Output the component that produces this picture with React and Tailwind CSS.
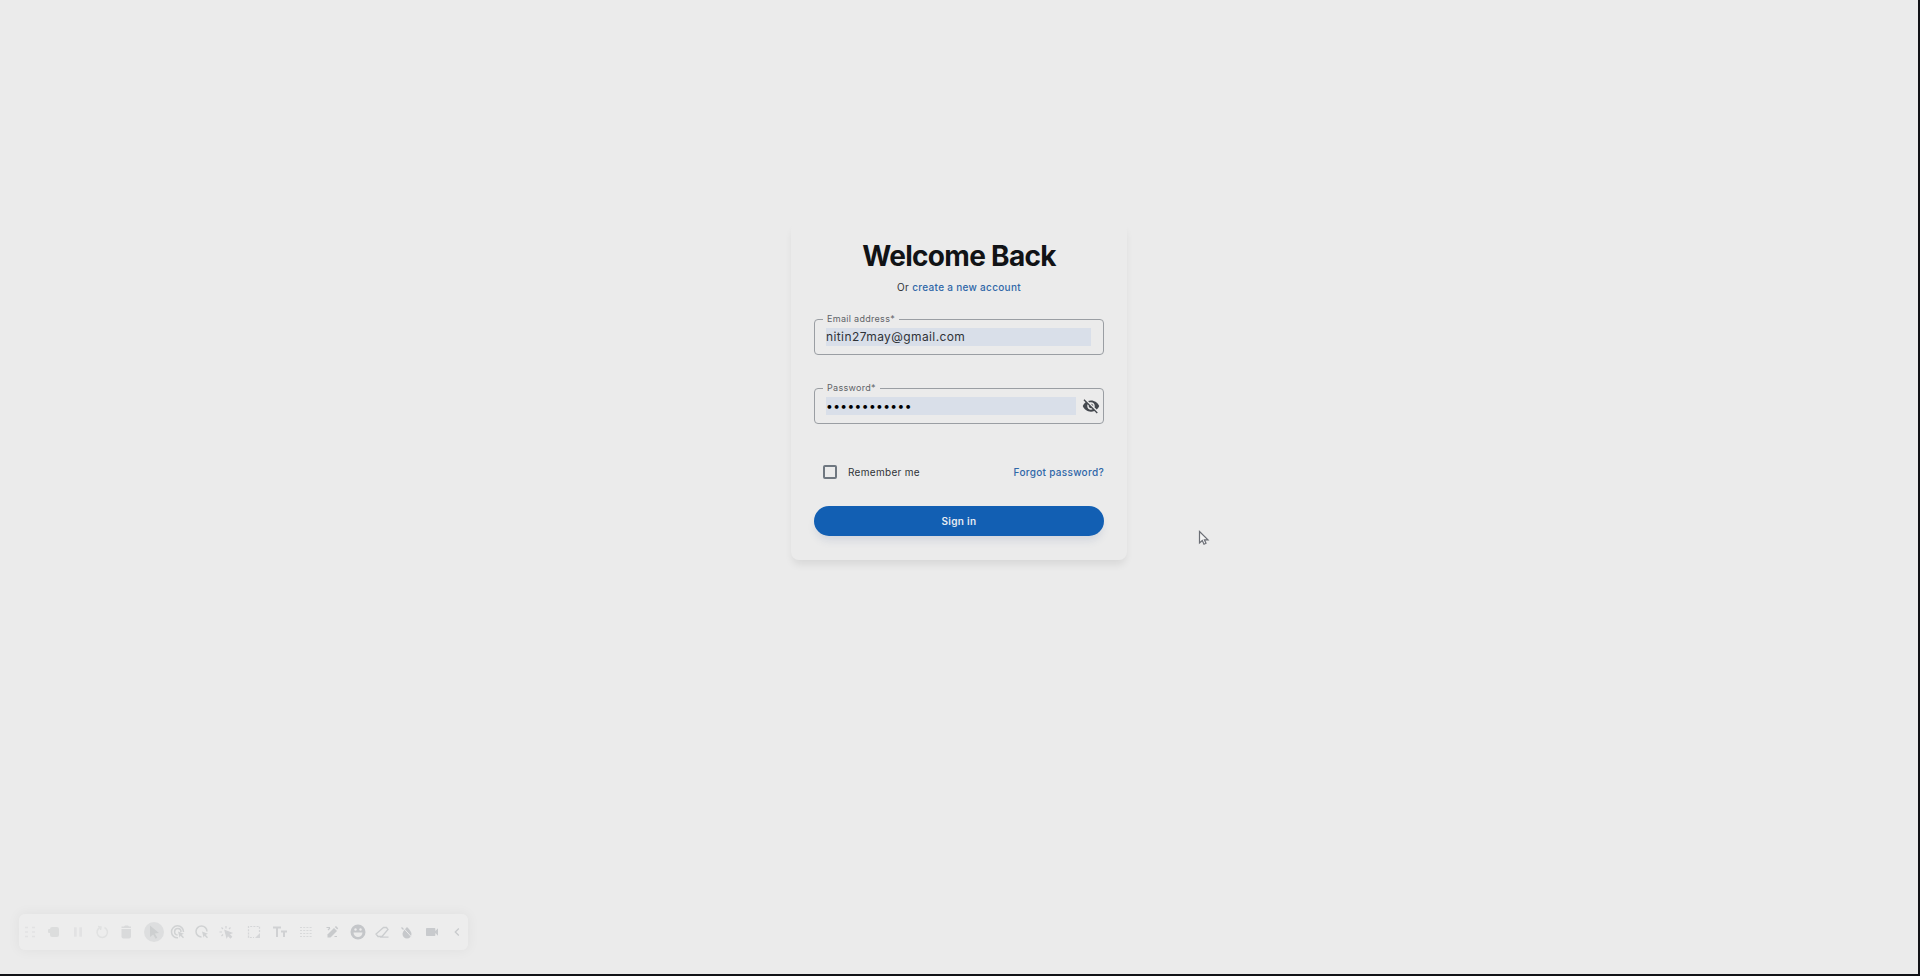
import { useState } from "react";
import {
  MdVisibilityOff,
  MdVisibility,
  MdPause,
  MdVideocam,
  MdChevronLeft,
} from "react-icons/md";

const MoveGlyph = () => (
  <svg viewBox="0 0 16 16" className="size-4" fill="none" stroke="currentColor" strokeWidth="1.5">
    <path d="M3 3.500h3M10 3.500h3M3 8h3M10 8h3M3 12.500h3M10 12.500h3" />
  </svg>
);

const RecordGlyph = () => (
  <svg viewBox="0 0 16 16" className="size-4" fill="currentColor">
    <rect x="4" y="3" width="9" height="10" rx="2" />
    <rect x="2" y="5" width="4" height="4" rx="1" />
  </svg>
);

const RestartGlyph = () => (
  <svg viewBox="0 0 16 16" className="size-4" fill="none" stroke="currentColor" strokeWidth="1.5">
    <path d="M6 3.500a5.200 5.200 0 1 0 4.500 0" />
    <path d="M4 2.500l3 .5-.5 3" />
  </svg>
);

const TrashGlyph = () => (
  <svg viewBox="0 0 16 16" className="size-4" fill="currentColor">
    <path d="M3.500 2.500h2.500L7 1.500h3l1 1h2V4H3.500z" />
    <path d="M3.500 5h9.500v7.500a2 2 0 0 1-2 2H5.500a2 2 0 0 1-2-2z" />
  </svg>
);

const PointerGlyph = () => (
  <svg viewBox="0 0 16 16" className="size-4" fill="currentColor">
    <path d="M4 1.500l9 7.500-4.200.6 2.500 4.200-1.700 1-2.400-4.300L4 13z" />
  </svg>
);

const TargetCursor = () => (
  <svg viewBox="0 0 16 16" className="size-4" fill="none" stroke="currentColor" strokeWidth="1.5">
    <path d="M13.500 8A6 6 0 1 0 8 13.800" />
    <path d="M11 8a3.200 3.200 0 1 0-3.400 3" />
    <path d="M8 7.500l6 2.300-2.300 1 2.300 2.500-1 1-2.500-2.500-.9 2z" fill="currentColor" stroke="none" />
  </svg>
);

const CircleCursor = () => (
  <svg viewBox="0 0 16 16" className="size-4" fill="none" stroke="currentColor" strokeWidth="1.5">
    <path d="M13 7.500A5.500 5.500 0 1 0 7.500 13" />
    <path d="M8 7.500l6 2.300-2.300 1 2.300 2.500-1 1-2.500-2.500-.9 2z" fill="currentColor" stroke="none" />
  </svg>
);

const ClickGlyph = () => (
  <svg viewBox="0 0 16 16" className="size-4" fill="none" stroke="currentColor" strokeWidth="1.2">
    <path d="M8 2v2.500M3.500 3.500l1.500 1.500M1.500 8H4M3.500 12L5 10.500M12.500 3.500L11 5" />
    <path d="M7 6.500l6.500 2.500-2.500 1 2.500 2.800-1 1L9.800 11l-1 2.200z" fill="currentColor" />
  </svg>
);

const SelectGlyph = () => (
  <svg viewBox="0 0 16 16" className="size-4" fill="none" stroke="currentColor" strokeWidth="1.2">
    <path d="M13.500 8V2.500h-11v11H8" strokeDasharray="2 1.2" />
    <path d="M14 9v5H9z" fill="currentColor" stroke="none" />
  </svg>
);

const TextGlyph = () => (
  <svg viewBox="0 0 16 16" className="size-4" fill="none" stroke="currentColor" strokeWidth="2">
    <path d="M1 3.500h8M5 3.500V13M9 7.500h6M12 7.500V13" />
  </svg>
);

const GridGlyph = () => (
  <svg viewBox="0 0 16 16" className="size-4" fill="none" stroke="currentColor" strokeWidth="1.2">
    <path d="M2 3.500h12M2 6.500h12M2 9.500h12M2 12.500h12" strokeDasharray="2 1.2" />
  </svg>
);

const DrawGlyph = () => (
  <svg viewBox="0 0 16 16" className="size-4" fill="currentColor">
    <path d="M10 4l3 3-6.500 6.500H3.500v-3z" />
    <path d="M12 2l2.200 2.200-1 1.200L10.800 3z" />
    <path d="M2.500 3.500h3.500M4 6l2-2M10.500 12.500h2.500" fill="none" stroke="currentColor" strokeWidth="1.2" />
  </svg>
);

const SmileGlyph = () => (
  <svg viewBox="0 0 16 16" className="size-4">
    <circle cx="8" cy="8" r="7.500" fill="currentColor" />
    <path d="M3.500 8.500h9a4.500 4.500 0 0 1-9 0z" fill="#ebebeb" />
    <circle cx="5.500" cy="5.500" r="1.200" fill="#ebebeb" />
    <circle cx="10.500" cy="5.500" r="1.200" fill="#ebebeb" />
  </svg>
);

const EraseGlyph = () => (
  <svg viewBox="0 0 16 16" className="size-4" fill="none" stroke="currentColor" strokeWidth="1.3">
    <path d="M9.500 3.500h3l1.500 2-6 7H4l-2-2.500zM6 13.200h8.500" />
  </svg>
);

const DropGlyph = () => (
  <svg viewBox="0 0 16 16" className="size-4" fill="currentColor">
    <path d="M8 3c3 3 4.500 5 4.500 7a4.500 4.500 0 0 1-9 0c0-1.500 1-3 2-4.300z" />
    <path d="M3.500 3l9.500 10.500" stroke="#ebebeb" strokeWidth="1" />
    <path d="M2.500 3.500l2 2" stroke="currentColor" strokeWidth="1.3" />
  </svg>
);

const groups = [
  {
    spacing: "gap-1",
    tools: [
      { name: "Move", icon: <MoveGlyph />, tone: "text-[#e2e2e3]" },
      { name: "Record", icon: <RecordGlyph />, tone: "text-[#dcdddd]" },
      { name: "Pause", icon: <MdPause />, tone: "text-[#e2e2e3]" },
      { name: "Restart", icon: <RestartGlyph />, tone: "text-[#e0e1e1]" },
      { name: "Delete", icon: <TrashGlyph />, tone: "text-[#d9dadb]" },
    ],
  },
  {
    spacing: "ml-2 gap-1",
    tools: [
      { name: "Pointer", icon: <PointerGlyph />, tone: "rounded-full bg-[#dddedf] text-[#cdcfd0]" },
      { name: "Highlight", icon: <TargetCursor />, tone: "text-[#d0d2d3]" },
      { name: "Spotlight", icon: <CircleCursor />, tone: "text-[#d0d2d3]" },
      { name: "Click", icon: <ClickGlyph />, tone: "text-[#d2d3d5]" },
    ],
  },
  {
    spacing: "ml-2 gap-1.5",
    tools: [
      { name: "Select", icon: <SelectGlyph />, tone: "text-[#d5d6d8]" },
      { name: "Text", icon: <TextGlyph />, tone: "text-[#d0d1d3]" },
      { name: "Grid", icon: <GridGlyph />, tone: "text-[#d8d9da]" },
      { name: "Draw", icon: <DrawGlyph />, tone: "text-[#c8cacc]" },
      { name: "Emoji", icon: <SmileGlyph />, tone: "text-[#c4c6c9]" },
    ],
  },
  {
    spacing: "ml-1 gap-[5px]",
    tools: [
      { name: "Erase", icon: <EraseGlyph />, tone: "text-[#cbcdcf]" },
      { name: "Blur", icon: <DropGlyph />, tone: "text-[#c6c8cb]" },
      { name: "Camera", icon: <MdVideocam />, tone: "text-[#c8cacd]" },
      { name: "Collapse", icon: <MdChevronLeft />, tone: "text-[#c8cacc]" },
    ],
  },
];

function Toolbar() {
  return (
    <div className="fixed bottom-[26px] left-[19px] flex h-9 items-center rounded-md bg-[#ededed] px-px shadow-[0_0_12px_2px_rgba(0,0,0,0.04)]">
      {groups.map((group) => (
        <div key={group.tools[0].name} className={`flex ${group.spacing}`}>
          {group.tools.map((tool) => (
            <button
              key={tool.name}
              type="button"
              aria-label={tool.name}
              className={`flex size-5 items-center justify-center text-base ${tool.tone}`}
            >
              {tool.icon}
            </button>
          ))}
        </div>
      ))}
    </div>
  );
}

function Field({ id, label, children }) {
  return (
    <fieldset className="h-[42px] rounded-[4px] border border-[#9a9ea3] pl-2">
      <legend className="px-1 text-[9px] leading-3 tracking-[0.3px] text-[#5f6368]">
        <label htmlFor={id}>{label}*</label>
      </legend>
      <div className="flex h-6 items-center pl-[3px]">{children}</div>
    </fieldset>
  );
}

export default function App() {
  const [email, setEmail] = useState("nitin27may@gmail.com");
  const [password, setPassword] = useState("password1234");
  const [showPassword, setShowPassword] = useState(false);
  const [remember, setRemember] = useState(false);

  return (
    <div className="min-h-screen border-r-2 border-b-2 border-[#111216] bg-[#ebebeb] pt-[222px] font-['Inter',sans-serif] text-[#2f3237]">
      <main className="mx-auto w-[336px] rounded-lg bg-[#ebebeb] px-[23px] pt-4 pb-6 shadow-[0_6px_8px_-2px_rgba(0,0,0,0.09)]">
        <h1 className="text-center text-[28px] leading-9 font-bold tracking-tight text-[#111316]">
          Welcome Back
        </h1>
        <p className="mt-[3px] text-center text-[10px] leading-5 tracking-[0.3px]">
          Or{" "}
          <a href="#register" className="font-medium text-[#2f67a8]">
            create a new account
          </a>
        </p>

        <form onSubmit={(e) => e.preventDefault()} className="mt-4">
          <Field id="email" label="Email address">
            <input
              id="email"
              type="email"
              value={email}
              onChange={(e) => setEmail(e.target.value)}
              className="mr-3 h-[18px] min-w-0 flex-1 bg-[#d9dfe9] text-[12px] tracking-[0.4px] outline-none"
            />
          </Field>
          <div className="mt-[27px]">
            <Field id="password" label="Password">
              <input
                id="password"
                type={showPassword ? "text" : "password"}
                value={password}
                onChange={(e) => setPassword(e.target.value)}
                className="h-[18px] min-w-0 flex-1 bg-[#d9dfe9] text-[12px] tracking-[0.4px] text-black outline-none"
              />
              <button
                type="button"
                aria-label="Toggle password visibility"
                onClick={() => setShowPassword(!showPassword)}
                className="mr-[3px] ml-1.5 text-lg text-[#44484e]"
              >
                {showPassword ? <MdVisibility /> : <MdVisibilityOff />}
              </button>
            </Field>
          </div>

          <div className="mt-9 flex h-6 items-center justify-between pl-[9px] text-[10px] tracking-[0.3px]">
            <label className="flex items-center gap-[11px]">
              <input
                type="checkbox"
                checked={remember}
                onChange={(e) => setRemember(e.target.checked)}
                className="size-3.5 appearance-none rounded-[2px] border-2 border-[#6f7780] checked:bg-[#125fb3]"
              />
              Remember me
            </label>
            <a href="#forgot" className="font-medium text-[#2f67a8]">
              Forgot password?
            </a>
          </div>

          <button
            type="submit"
            className="mt-[22px] h-[30px] w-full rounded-full bg-[#125fb3] text-[10px] font-semibold tracking-[0.3px] text-[#e6ebf2] shadow-[0_6px_8px_-2px_rgba(60,90,140,0.15)]"
          >
            Sign in
          </button>
        </form>
      </main>

      <Toolbar />

      <svg viewBox="0 0 12 16" className="fixed top-[530px] left-[1198px] h-4 w-3">
        <path
          d="M1.500 1.500v11.500l2.800-2.500 1.700 3.700 2-.9-1.600-3.500H10z"
          fill="#f4f4f4"
          stroke="#6b6e75"
          strokeWidth="1.2"
        />
      </svg>
    </div>
  );
}
